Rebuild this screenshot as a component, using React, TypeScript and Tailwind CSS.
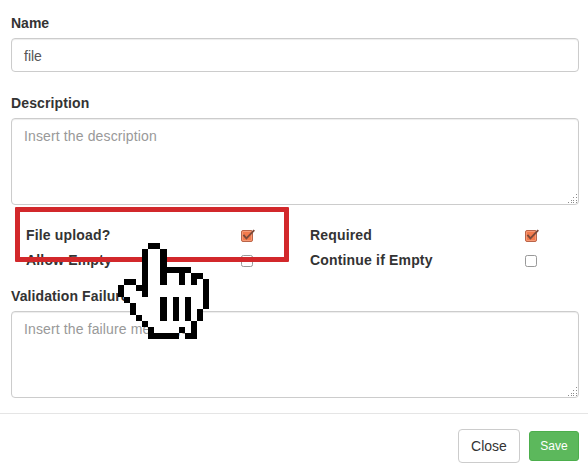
import React from "react";

function Grip() {
  const dots = [[8, 0], [8, 3], [5, 3], [8, 6], [5, 6], [3, 6], [8, 8], [5, 8], [3, 8], [0, 8]];
  return (
    <svg className="absolute right-0 bottom-[1px]" width="10" height="9" shapeRendering="crispEdges">
      {dots.map(([x, y]) => (
        <rect key={`${x}-${y}`} x={x} y={y} width="1" height="1" fill="#8c8c8c" />
      ))}
    </svg>
  );
}

function Area({ text }: { text: string }) {
  return (
    <div className="relative h-[87px] rounded-[4px] border border-[#ccc] px-3 py-[7px] leading-5 tracking-[0.13px] text-[#999] shadow-[inset_0_1px_1px_rgba(0,0,0,0.075)]">
      {text}
      <Grip />
    </div>
  );
}

function Check({ on = false }: { on?: boolean }) {
  return (
    <svg className="block shrink-0" width="14" height="13" viewBox="0 0 14 13">
      {on ? (
        <>
          <rect x="0.5" y="1.5" width="11" height="11" rx="1.5" fill="#f37a4c" stroke="#b9654a" />
          <rect x="1.5" y="2.5" width="9" height="9" rx="0.5" fill="none" stroke="#f79a76" />
          <path d="M2.4 5.8 5.4 9.3 13.3 1.2" fill="none" stroke="#7c4a3a" strokeWidth="1.9" />
        </>
      ) : (
        <rect x="0.5" y="1.5" width="11" height="11" rx="1.8" fill="#fff" stroke="#999" />
      )}
    </svg>
  );
}

function Option({ label, on }: { label: string; on?: boolean }) {
  return (
    <div className="flex h-[25px] w-[284px] items-start">
      <span className="w-[215px] font-bold leading-5 tracking-[0.17px]">{label}</span>
      <span className="pt-[4px]">
        <Check on={on} />
      </span>
    </div>
  );
}

// Each entry is column, row, width and height in cells.
const outline = [
  [5, 0, 2, 1], [4, 1, 1, 8], [7, 1, 1, 6], [7, 4, 5, 1], [10, 4, 1, 3],
  [12, 5, 2, 1], [12, 5, 1, 2], [14, 6, 1, 5], [13, 11, 1, 2], [12, 13, 1, 2],
  [11, 15, 2, 1], [10, 14, 1, 1], [5, 15, 5, 1], [5, 14, 1, 1], [4, 13, 1, 1],
  [3, 12, 1, 1], [2, 10, 1, 2], [1, 9, 1, 1], [0, 7, 1, 2], [1, 6, 2, 1],
  [3, 7, 1, 1], [7, 9, 1, 4], [9, 9, 1, 4], [11, 9, 1, 4],
];
const inside = [
  [5, 1, 2, 4], [5, 5, 7, 1], [5, 6, 9, 1], [1, 7, 13, 1], [1, 8, 13, 1],
  [2, 9, 12, 1], [3, 10, 11, 1], [3, 11, 10, 1], [4, 12, 9, 1], [5, 13, 7, 1], [6, 14, 6, 1],
];

function Hand() {
  return (
    <svg className="absolute left-[118px] top-[243px]" width="91" height="96" viewBox="0 0 15 16" preserveAspectRatio="none">
      <g shapeRendering="crispEdges">
        {inside.map(([x, y, w, h]) => (
          <rect key={`${x}-${y}-${w}-${h}`} x={x} y={y} width={w} height={h} fill="#fff" />
        ))}
        {outline.map(([x, y, w, h]) => (
          <rect key={`${x}-${y}-${w}-${h}`} x={x} y={y} width={w} height={h} fill="#000" />
        ))}
      </g>
    </svg>
  );
}

export default function App() {
  return (
    <div className="relative h-[469px] w-[588px] overflow-hidden bg-white font-['Liberation_Sans',Arial,sans-serif] text-[14px] leading-5 text-[#333]">
      <div className="flex flex-col pt-[13px] pr-[9px] pl-[11px]">
        <label className="mb-[5px] font-bold">Name</label>
        <div className="h-[34px] rounded-[4px] border border-[#ccc] px-3 py-[7px] text-[#555] shadow-[inset_0_1px_1px_rgba(0,0,0,0.075)]">
          file
        </div>
        <label className="mt-[21px] mb-[5px] font-bold tracking-[0.13px]">Description</label>
        <Area text="Insert the description" />
        <div className="mt-5 -mr-[30px] flex flex-wrap pl-[15px]">
          <Option label="File upload?" on />
          <Option label="Required" on />
          <Option label="Allow Empty" />
          <Option label="Continue if Empty" />
        </div>
        <label className="mt-[11px] mb-[5px] font-bold tracking-[0.1px]">Validation Failure Message</label>
        <Area text="Insert the failure message" />
      </div>
      <div className="mt-[15px] flex items-center justify-end gap-[9px] border-t border-[#e5e5e5] pt-[15px] pr-[9px]">
        <button className="h-[34px] w-[62px] rounded-[4px] border border-[#ccc] bg-white">Close</button>
        <button className="h-[30px] w-[50px] rounded-[3px] border border-[#4cae4c] bg-[#5cb85c] text-[12px] text-white">Save</button>
      </div>
      <div className="absolute left-[15px] top-[207px] h-[55px] w-[274px] rounded-[1px] border-[5px] border-[#d2282b]" />
      <Hand />
    </div>
  );
}
